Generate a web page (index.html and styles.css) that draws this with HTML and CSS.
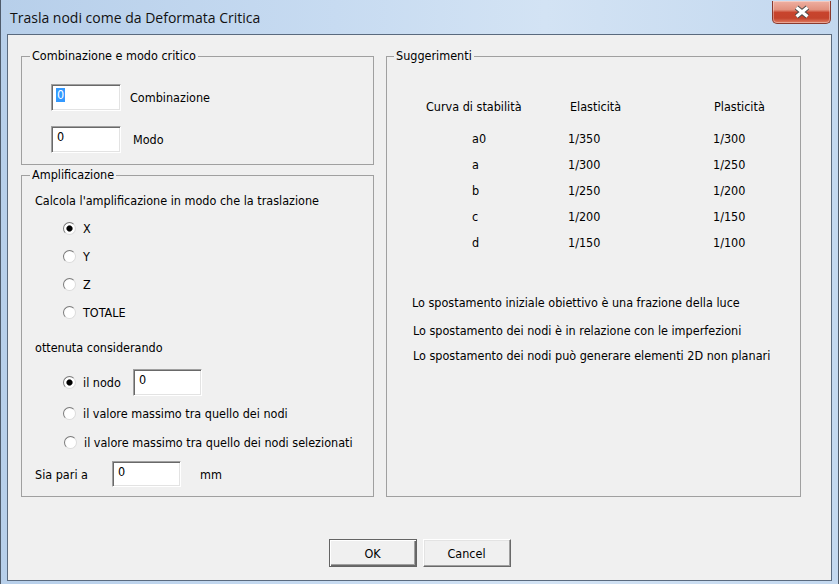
FILE: index.html
```
<!DOCTYPE html>
<html lang="it">
<head>
<meta charset="utf-8">
<title>Trasla nodi come da Deformata Critica</title>
<link rel="stylesheet" href="styles.css">
</head>
<body>
<div class="window">
  <div class="titlebar">
    <span class="title">Trasla nodi come da Deformata Critica</span>
    <div class="close" aria-label="Chiudi">
      <svg width="18" height="14" viewBox="0 0 18 14">
        <path d="M3.5 2.5 L14.5 11.5 M14.5 2.5 L3.5 11.5" stroke="#4b4b4b" stroke-width="5.2" fill="none"/>
        <path d="M3.5 2.5 L14.5 11.5 M14.5 2.5 L3.5 11.5" stroke="#ffffff" stroke-width="3.2" fill="none"/>
      </svg>
    </div>
  </div>
  <div class="client">
    <div class="panes">
      <div class="leftcol">
        <fieldset class="group g1">
          <legend>Combinazione e modo critico</legend>
          <div class="g1-body">
            <div class="frow">
              <span class="input"><span class="sel">0</span></span>
              <span class="lbl-comb">Combinazione</span>
            </div>
            <div class="frow frow2">
              <span class="input">0</span>
              <span class="lbl-modo">Modo</span>
            </div>
          </div>
        </fieldset>
        <fieldset class="group g2">
          <legend>Amplificazione</legend>
          <div class="g2-body">
            <div class="para">Calcola l'amplificazione in modo che la traslazione</div>
            <div class="radio-list">
              <div class="opt"><span class="radio on"></span><span>X</span></div>
              <div class="opt"><span class="radio"></span><span>Y</span></div>
              <div class="opt"><span class="radio"></span><span>Z</span></div>
              <div class="opt"><span class="radio"></span><span>TOTALE</span></div>
            </div>
            <div class="para para2">ottenuta considerando</div>
            <div class="node-list">
              <div class="opt opt-nodo"><span class="radio on"></span><span class="lbl-nodo">il nodo</span><span class="input input-nodo">0</span></div>
              <div class="opt opt-max"><span class="radio"></span><span>il valore massimo tra quello dei nodi</span></div>
              <div class="opt opt-sel"><span class="radio"></span><span>il valore massimo tra quello dei nodi selezionati</span></div>
            </div>
            <div class="frow-sia">
              <span class="lbl-sia">Sia pari a</span>
              <span class="input input-sia">0</span>
              <span class="lbl-mm">mm</span>
            </div>
          </div>
        </fieldset>
      </div>
      <fieldset class="group g3">
        <legend class="legend-sugg">Suggerimenti</legend>
        <div class="g3-body">
          <div class="table">
            <div class="th">Curva di stabilità</div><div class="th th2">Elasticità</div><div class="th th3">Plasticità</div>
            <div class="td td1">a0</div><div class="td">1/350</div><div class="td">1/300</div>
            <div class="td td1">a</div><div class="td">1/300</div><div class="td">1/250</div>
            <div class="td td1">b</div><div class="td">1/250</div><div class="td">1/200</div>
            <div class="td td1">c</div><div class="td">1/200</div><div class="td">1/150</div>
            <div class="td td1">d</div><div class="td">1/150</div><div class="td">1/100</div>
          </div>
          <div class="notes">
            <p class="note n1">Lo spostamento iniziale obiettivo è una frazione della luce</p>
            <p class="note n2">Lo spostamento dei nodi è in relazione con le imperfezioni</p>
            <p class="note n3">Lo spostamento dei nodi può generare elementi 2D non planari</p>
          </div>
        </div>
      </fieldset>
    </div>
    <div class="buttons">
      <button class="btn btn-default" type="button">OK</button>
      <button class="btn" type="button">Cancel</button>
    </div>
  </div>
</div>
</body>
</html>
```
FILE: styles.css
```
html, body {
  margin: 0;
  padding: 0;
}
body {
  font-family: "DejaVu Sans Condensed", "DejaVu Sans", sans-serif;
  font-stretch: condensed;
  font-size: 12.5px;
  color: #000;
  background: #fff;
}
.window {
  width: 839px;
  height: 584px;
  box-sizing: border-box;
  border-left: 1px solid #4f5b6b;
  border-right: 1px solid #4f5b6b;
  padding: 0 6px 3px 6px;
  background: linear-gradient(to right, #b7cfea 0%, #c7dbf1 40%, #d3e3f4 65%, #c3d8ef 100%);
  display: flex;
  flex-direction: column;
}
.titlebar {
  height: 34px;
  display: flex;
  align-items: flex-start;
}
.title {
  font-family: "Open Sans", "Noto Sans", sans-serif;
  font-stretch: normal;
  font-size: 14px;
  line-height: 20px;
  margin: 8px 0 0 3px;
  color: #111;
}
.close {
  margin-left: auto;
  margin-right: 1px;
  margin-top: 1px;
  width: 59px;
  height: 23px;
  box-sizing: border-box;
  border: 1px solid #8a3a2e;
  border-top: none;
  border-radius: 0 0 5px 5px;
  background: linear-gradient(#eeb0a2 0%, #e2917e 40%, #c8442d 52%, #c4432c 78%, #e07d63 100%);
  box-shadow: inset 0 0 0 1px rgba(255, 255, 255, 0.35);
  display: flex;
  align-items: center;
  justify-content: center;
}
.close svg {
  display: block;
}
.client {
  border: 1px solid #5a6a7e;
  background: #f0f0f0;
  height: 547px;
  box-sizing: border-box;
  display: flex;
  flex-direction: column;
}
.panes {
  display: grid;
  grid-template-columns: 353px 415px;
  column-gap: 12px;
  padding: 14px 0 0 13px;
}
.leftcol {
  display: flex;
  flex-direction: column;
}
.group {
  margin: 0;
  padding: 0;
  min-width: 0;
  border: 1px solid #a0a0a0;
}
.group legend {
  margin-left: 8px;
  padding: 0 2px;
  height: 14px;
  line-height: 14px;
}
.legend-sugg {
  margin-left: 7px !important;
}
.g1-body {
  padding: 21px 0 11px 29px;
}
.frow {
  display: flex;
  align-items: center;
  height: 27px;
}
.frow2 {
  margin-top: 15px;
}
.input {
  display: block;
  box-sizing: border-box;
  width: 70px;
  height: 27px;
  background: #fff;
  border: 1px solid;
  border-color: #a0a0a0 #ffffff #ffffff #a0a0a0;
  box-shadow: inset 1px 1px 0 #696969, inset -1px -1px 0 #e3e3e3;
  padding: 3px 0 0 5px;
  line-height: 14px;
  flex: none;
}
.sel {
  display: inline-block;
  height: 14px;
  line-height: 14px;
  background: #3399ff;
  color: #fff;
  padding: 0 1px;
  margin-left: -1px;
}
.lbl-comb {
  margin-left: 9px;
}
.lbl-modo {
  margin-left: 12px;
}
.g2 {
  margin-top: 3px;
}
.g2-body {
  padding: 12px 0 9px 13px;
}
.para {
  height: 14px;
  line-height: 14px;
  white-space: nowrap;
}
.para2 {
  margin-top: 15px;
}
.radio-list {
  margin-top: 6px;
  padding-left: 28px;
}
.opt {
  height: 28px;
  display: flex;
  align-items: center;
  white-space: nowrap;
}
.radio {
  flex: none;
  width: 13px;
  height: 13px;
  box-sizing: border-box;
  border-radius: 50%;
  border: 1px solid;
  border-color: #7a7a7a #dcdcdc #dcdcdc #7a7a7a;
  background: radial-gradient(circle at 55% 55%, #ffffff 55%, #e4e4e4 100%);
  margin-right: 7px;
}
.radio.on {
  background: radial-gradient(circle at 50% 50%, #000 0, #000 2.3px, #555 2.9px, #fff 3.6px, #fff 60%, #e4e4e4 100%);
}
.node-list {
  margin-top: 14px;
  padding-left: 28px;
}
.opt-nodo {
  height: 27px;
}
.lbl-nodo {
  width: 50px;
}
.input-nodo {
  width: 69px;
}
.opt-max {
  margin-top: 3px;
}
.opt-sel {
  margin-top: 1px;
  padding-left: 1px;
}
.frow-sia {
  margin-top: 5px;
  height: 26px;
  display: flex;
  align-items: center;
}
.lbl-sia {
  width: 77px;
}
.input-sia {
  width: 69px;
  height: 26px;
}
.lbl-mm {
  margin-left: 19px;
}
.g3-body {
  padding: 31px 0 0 0;
}
.table {
  display: grid;
  grid-template-columns: 142px 145px auto;
  grid-template-rows: 32px;
  grid-auto-rows: 26px;
  padding-left: 39px;
  align-items: center;
}
.th {
  align-self: start;
  line-height: 26px;
}
.th2 {
  padding-left: 2px;
}
.th3 {
  padding-left: 1px;
}
.td {
  line-height: 14px;
}
.td1 {
  padding-left: 46px;
}
.notes {
  margin-top: 40px;
}
.note {
  margin: 0;
  height: 14px;
  line-height: 14px;
  white-space: nowrap;
}
.n1 {
  padding-left: 25px;
}
.n2 {
  padding-left: 26px;
  margin-top: 14px;
}
.n3 {
  padding-left: 26px;
  margin-top: 11px;
}
.buttons {
  display: flex;
  justify-content: center;
  gap: 6px;
  margin-top: 42px;
}
.btn {
  width: 88px;
  height: 28px;
  box-sizing: border-box;
  font: inherit;
  color: #000;
  background: #f0f0f0;
  border: 1px solid;
  border-color: #ffffff #696969 #696969 #ffffff;
  box-shadow: inset -1px -1px 0 #a0a0a0, inset 1px 1px 0 #e3e3e3;
  padding: 0;
}
.btn-default {
  border-color: #646464;
  box-shadow: inset 1px 1px 0 #ffffff, inset -1px -1px 0 #696969, inset -2px -2px 0 #a0a0a0;
}
```
